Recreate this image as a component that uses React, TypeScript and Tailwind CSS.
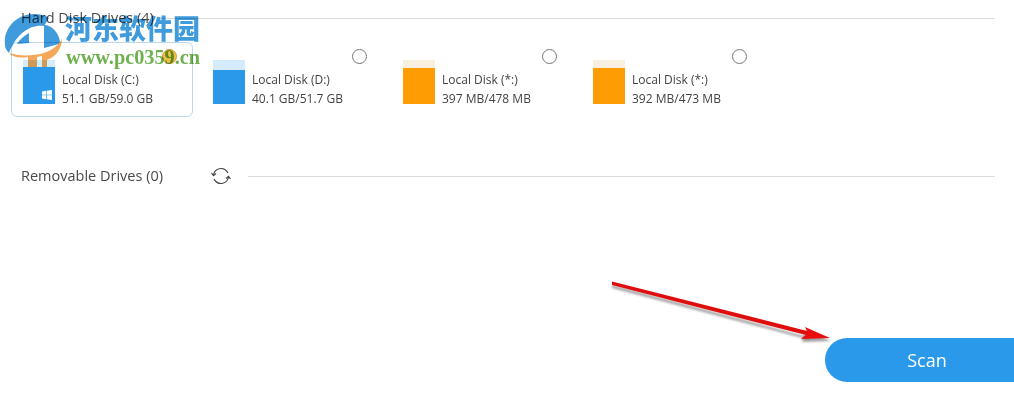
import React from "react";

const drives = [
  { name: "Local Disk (C:)", size: "51.1 GB/59.0 GB", color: "bg-[#2b99ea]", empty: "bg-[#d3ebfa]", emptyH: "h-[7px]", selected: true, windows: true },
  { name: "Local Disk (D:)", size: "40.1 GB/51.7 GB", color: "bg-[#2b99ea]", empty: "bg-[#d3ebfa]", emptyH: "h-[10px]" },
  { name: "Local Disk (*:)", size: "397 MB/478 MB", color: "bg-[#fe9c03]", empty: "bg-[#f9efe0]", emptyH: "h-[8px]" },
  { name: "Local Disk (*:)", size: "392 MB/473 MB", color: "bg-[#fe9c03]", empty: "bg-[#f9efe0]", emptyH: "h-[8px]" },
];

function DriveCard({ d }: { d: (typeof drives)[number] }) {
  return (
    <div className={`relative w-[182px] h-[75px] rounded-md border flex items-end pl-[11px] pb-[12px] ${d.selected ? "border-[#bcd8ee]" : "border-transparent"}`}>
      <span className={`absolute right-[15px] top-[6px] w-[15px] h-[15px] rounded-full border ${d.selected ? "border-[#e8963a] bg-[#e6c24a]" : "border-[#777] bg-white"}`} />
      <div className="w-[32px] h-[44px] flex flex-col shrink-0">
        <div className={`${d.empty} ${d.emptyH}`} />
        <div className={`${d.color} flex-1 relative`}>
          {d.windows && (
            <svg viewBox="0 0 12 12" className="absolute right-[3px] bottom-[4px] w-[10px] h-[10px]" fill="#fff">
              <path d="M0 1.7 5 1v4.6H0zM5.7.9 12 0v5.6H5.7zM0 6.3h5V11l-5-.7zM5.7 6.3H12V12l-6.3-.9z" />
            </svg>
          )}
        </div>
      </div>
      <div className="ml-[7px] mb-[-4px] text-[12px] leading-[19px] text-[#444] whitespace-nowrap">
        <div>{d.name}</div>
        <div>{d.size}</div>
      </div>
    </div>
  );
}

function Watermark() {
  return (
    <div className="absolute left-0 top-[10px] flex items-start pointer-events-none mix-blend-multiply">
      <svg viewBox="0 0 70 60" className="w-[70px] h-[60px] shrink-0">
        <path d="M5 35C3 18 17 4 34 4c6 0 11 1 15 4l-5 8C32 14 17 22 9 43 7 41 5 38 5 35Z" fill="#3f9bdc" />
        <path d="M44 15c8 0 15 8 16 17l-1 2-15 4Z" fill="#3f9bdc" />
        <path d="M17 34C20 29 24 26 29 23V33Z" fill="#3f9bdc" />
        <path d="M9 43C18 46 30 46 40 44 50 42 58 36 62 29 62 38 56 47 47 50V57H42V46L37 47V57H28V47C20 48 14 48 9 43Z" fill="#f4a95a" />
      </svg>
      <div className="-ml-[5px] font-['Noto_Sans_CJK_SC',serif] font-black">
        <div className="mt-[3px] text-[27px] leading-[30px] text-[#3f9bdc] whitespace-nowrap">河东软件园</div>
        <div className="mt-[3px] ml-[1px] text-[20.3px] leading-[22px] font-['Liberation_Serif',serif] font-bold text-[#6fb04f] whitespace-nowrap">www.pc0359.cn</div>
      </div>
    </div>
  );
}

export default function App() {
  return (
    <div className="relative w-[1014px] h-[411px] bg-white overflow-hidden font-['Open_Sans','Noto_Sans',sans-serif]">
      <div className="flex items-center h-[36px] pl-[21px] pr-[19px]">
        <span className="text-[14.5px] text-[#4a4a4a] whitespace-nowrap pb-[1px]">Hard Disk Drives (4)</span>
        <div className="flex-1 h-px bg-[#dcdcdc] ml-[7px]" />
      </div>
      <div className="flex gap-[8px] pl-[11px] mt-[6px]">
        {drives.map((d, i) => (
          <DriveCard key={i} d={d} />
        ))}
      </div>
      <div className="flex items-center h-[30px] mt-[44px] pl-[21px] pr-[19px]">
        <span className="text-[14.5px] text-[#4a4a4a] whitespace-nowrap pb-[1px]">Removable Drives (0)</span>
        <svg viewBox="0 0 20 20" className="w-[20px] h-[20px] ml-[48px] -mt-[1px]" fill="none" stroke="#444" strokeWidth="1.2">
          <path d="M2.5 9a7.6 7.6 0 0 1 13.6-3.4L17 7" />
          <path d="M17.5 11a7.6 7.6 0 0 1-13.6 3.4L3 13" />
          <path d="M0.5 7 2.5 9.6 5 7.5" />
          <path d="M19.5 13 17.5 10.4 15 12.5" />
        </svg>
        <div className="flex-1 h-px bg-[#dcdcdc] ml-[17px]" />
      </div>
      <div className="flex justify-end mt-[147px]">
        <button className="w-[189px] h-[44px] rounded-l-[22px] bg-[#2b99ea] text-white text-[18px] pl-[15px] pt-[1px]">Scan</button>
      </div>
      <svg className="absolute left-[605px] top-[275px] w-[235px] h-[75px] pointer-events-none" viewBox="0 0 235 75">
        <g className="blur-[1px]" fill="#555" fillOpacity="0.55">
          <path d="M7 10 203 62 205 65 7 13Z" />
          <path d="M200 55 226 66 197 67Z" />
        </g>
        <path d="M7 6.5 204 56.5 203 60.5 7 10Z" fill="#e00d0d" />
        <path d="M200 52 225 63 196 64 203 58Z" fill="#ea0f0f" />
      </svg>
      <Watermark />
    </div>
  );
}
